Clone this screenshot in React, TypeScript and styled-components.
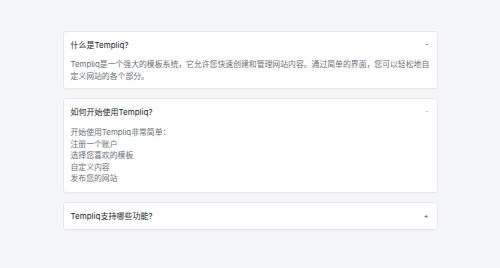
import React from "react";
import styled, { createGlobalStyle } from "styled-components";

const Global = createGlobalStyle`
  html, body { margin: 0; padding: 0; background: #f5f6f8; }
  body { font-family: Inter, "Noto Sans CJK SC", "Noto Sans", sans-serif; }
`;

const Page = styled.div`
  width: 500px;
  height: 268px;
  box-sizing: border-box;
  padding-top: 31px;
  background: #f5f6f8;
`;

const List = styled.div`
  width: 375px;
  margin: 0 auto;
  display: flex;
  flex-direction: column;
  gap: 9px;
`;

const Card = styled.section`
  background: #ffffff;
  border: 1px solid #e6e8eb;
  border-radius: 3px;
  box-shadow: 0 1px 1px rgba(0, 0, 0, 0.03);
`;

const Header = styled.div`
  display: flex;
  align-items: center;
  justify-content: space-between;
  padding: 7px 7px 7px 7px;
  height: 12px;
`;

const Title = styled.div`
  font-size: 8px;
  line-height: 12px;
  color: #22262b;
  font-weight: 400;
`;

const Toggle = styled.span<{ $muted?: boolean }>`
  font-size: 7px;
  line-height: 12px;
  color: ${(p) => (p.$muted ? "#9aa0a6" : "#3a3f45")};
  padding-right: 1px;
`;

const Body = styled.div<{ $tall?: boolean }>`
  padding: ${(p) => (p.$tall ? "2px 5px 7px 7px" : "1px 5px 6px 7px")};
  font-size: 7.85px;
  line-height: 11.5px;
  color: #6b7078;
`;

const Line = styled.div``;

export default function App() {
  return (
    <>
      <Global />
      <Page>
        <List>
          <Card>
            <Header>
              <Title>什么是Templiq?</Title>
              <Toggle>-</Toggle>
            </Header>
            <Body>
              Templiq是一个强大的模板系统，它允许您快速创建和管理网站内容。通过简单的界面，您可以轻松地自定义网站的各个部分。
            </Body>
          </Card>
          <Card>
            <Header>
              <Title>如何开始使用Templiq?</Title>
              <Toggle $muted>-</Toggle>
            </Header>
            <Body $tall>
              <Line>开始使用Templiq非常简单：</Line>
              <Line>注册一个账户</Line>
              <Line>选择您喜欢的模板</Line>
              <Line>自定义内容</Line>
              <Line>发布您的网站</Line>
            </Body>
          </Card>
          <Card>
            <Header>
              <Title>Templiq支持哪些功能?</Title>
              <Toggle>+</Toggle>
            </Header>
          </Card>
        </List>
      </Page>
    </>
  );
}
